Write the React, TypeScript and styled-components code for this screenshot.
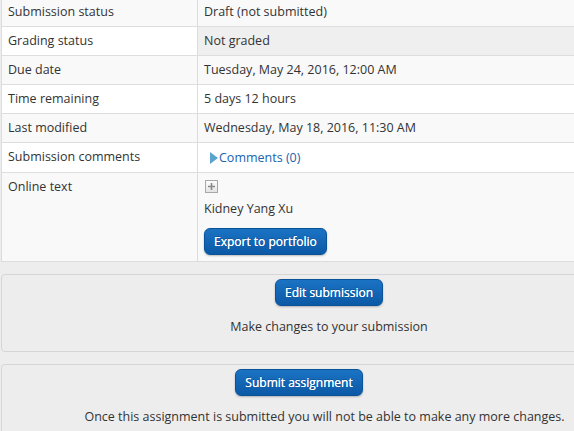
import React from "react";
import styled, { createGlobalStyle } from "styled-components";

const Global = createGlobalStyle`
  html, body { margin: 0; padding: 0; background: #ededed; overflow: hidden; }
  body { font-family: "Open Sans", "DejaVu Sans", sans-serif; font-size: 12.5px; color: #333; }
`;

const Page = styled.div`
  width: 656px;
  margin: -3px 0 0 1px;
  display: flex;
  flex-direction: column;
  gap: 12px;
`;

const Table = styled.div`
  display: grid;
  grid-template-columns: 196px 1fr;
  border-left: 1px solid #dcdcdc;
  border-bottom: 1px solid #dcdcdc;
`;

const Cell = styled.div<{ $odd: boolean; $label?: boolean; $status?: boolean }>`
  background: ${(p) => (p.$status ? "#efefef" : p.$odd ? "#f9f9f9" : "#ffffff")};
  border-top: 1px solid #dedede;
  border-right: ${(p) => (p.$label ? "1px solid #dcdcdc" : "none")};
  padding: 5px 6px;
  line-height: 18px;
  min-height: 18px;
  display: flex;
  flex-direction: column;
  align-items: flex-start;
`;

const Link = styled.a`
  color: #1763ad;
  text-decoration: none;
  display: flex;
  align-items: center;
  gap: 1px;
  min-height: 19px;
  margin-left: 6px;
`;

const Triangle = styled.span`
  width: 0;
  height: 0;
  border-top: 6px solid transparent;
  border-bottom: 6px solid transparent;
  border-left: 8px solid #5aa3cd;
`;

const PlusBox = styled.span`
  width: 11px;
  height: 11px;
  border: 1px solid #a8a8a8;
  background: linear-gradient(#fdfdfd, #e4e4e4);
  margin: 2px 0 7px 1px;
  display: flex;
  align-items: center;
  justify-content: center;
`;

const NameText = styled.div`
  margin-bottom: 10px;
`;

const ExportWrap = styled.div`
  padding-bottom: 1px;
`;

const Button = styled.button`
  font-family: "Open Sans", "DejaVu Sans", sans-serif;
  font-size: 12px;
  font-weight: 400;
  color: #fff;
  background: linear-gradient(#1b73c4, #0b59a6);
  border: 1px solid #0a5399;
  border-radius: 6px;
  height: 27px;
  padding: 0 9px;
  box-shadow: 0 1px 2px rgba(0, 0, 0, 0.25);
  text-shadow: 0 0 0.6px #fff, 0 -1px 0 rgba(0, 0, 0, 0.2);
  cursor: pointer;
`;

const Box = styled.div`
  background: #ededed;
  border: 1px solid #d6d6d6;
  border-radius: 4px;
  display: flex;
  flex-direction: column;
  align-items: center;
  padding: 4px 0 15px;
`;

const ButtonRow = styled.div<{ $shift: number }>`
  display: flex;
  justify-content: center;
  align-self: stretch;
  padding-right: ${(p) => p.$shift}px;
`;

const Note = styled.div<{ $shift: number }>`
  align-self: stretch;
  text-align: center;
  margin-top: 12px;
  line-height: 18px;
  padding-right: ${(p) => p.$shift}px;
`;

const rows: { label: string; value: React.ReactNode; status?: boolean }[] = [
  { label: "Submission status", value: "Draft (not submitted)" },
  { label: "Grading status", value: "Not graded", status: true },
  { label: "Due date", value: "Tuesday, May 24, 2016, 12:00 AM" },
  { label: "Time remaining", value: "5 days 12 hours" },
  { label: "Last modified", value: "Wednesday, May 18, 2016, 11:30 AM" },
  {
    label: "Submission comments",
    value: (
      <Link href="#">
        <Triangle />
        Comments (0)
      </Link>
    ),
  },
  {
    label: "Online text",
    value: (
      <>
        <PlusBox>
          <svg width="9" height="9" viewBox="0 0 9 9">
            <path d="M4.5 1v7M1 4.5h7" stroke="#8a8a8a" strokeWidth="1.6" />
          </svg>
        </PlusBox>
        <NameText>Kidney Yang Xu</NameText>
        <ExportWrap>
          <Button>Export to portfolio</Button>
        </ExportWrap>
      </>
    ),
  },
];

export default function App() {
  return (
    <>
      <Global />
      <Page>
        <Table>
          {rows.map((r, i) => (
            <React.Fragment key={r.label}>
              <Cell $odd={i % 2 === 0} $label>
                {r.label}
              </Cell>
              <Cell $odd={i % 2 === 0} $status={r.status}>
                {r.value}
              </Cell>
            </React.Fragment>
          ))}
        </Table>
        <Box>
          <ButtonRow $shift={0}>
            <Button>Edit submission</Button>
          </ButtonRow>
          <Note $shift={0}>Make changes to your submission</Note>
        </Box>
        <Box>
          <ButtonRow $shift={60}>
            <Button>Submit assignment</Button>
          </ButtonRow>
          <Note $shift={9}>
            Once this assignment is submitted you will not be able to make any more changes.
          </Note>
        </Box>
      </Page>
    </>
  );
}
